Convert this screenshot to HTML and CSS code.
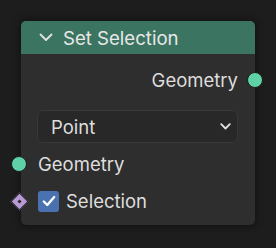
FILE: index.html
```html
<!DOCTYPE html>
<html>
<head>
<meta charset="utf-8">
<link rel="stylesheet" href="styles.css">
</head>
<body>
<div class="node">
  <div class="header">
    <svg class="chev" width="14" height="9" viewBox="0 0 14 9"><polyline points="1.5,1.5 7,7 12.5,1.5" fill="none" stroke="#e2e2e2" stroke-width="1.8" stroke-linecap="round" stroke-linejoin="round"/></svg>
    <span class="title">Set Selection</span>
  </div>
  <div class="content">
    <div class="row out">
      <span>Geometry</span>
      <span class="socket circle right"></span>
    </div>
    <div class="dropdown">
      <span>Point</span>
      <svg width="11" height="7" viewBox="0 0 11 7"><polyline points="1.2,1.2 5.5,5.5 9.8,1.2" fill="none" stroke="#e2e2e2" stroke-width="1.8" stroke-linecap="round" stroke-linejoin="round"/></svg>
    </div>
    <div class="row in">
      <span class="socket circle left"></span>
      <span>Geometry</span>
    </div>
    <div class="row in sel">
      <span class="socket diamond left"><span class="dot"></span></span>
      <span class="check"><svg width="14" height="12" viewBox="0 0 14 12"><polyline points="1.8,6.5 5.3,10 12.2,2" fill="none" stroke="#ffffff" stroke-width="2.3" stroke-linecap="round" stroke-linejoin="round"/></svg></span>
      <span>Selection</span>
    </div>
  </div>
</div>
</body>
</html>
```
FILE: styles.css
```css
html, body {
  margin: 0;
  padding: 0;
  background: #1d1d1d;
  width: 276px;
  height: 248px;
  overflow: hidden;
}
body {
  font-family: Inter, "Noto Sans", sans-serif;
  color: #dedede;
}
.node {
  margin: 21px 0 0 21px;
  width: 234px;
  border-radius: 5px;
  background: #2e2e2e;
  box-shadow: 0 0 6px 2px rgba(0,0,0,0.35);
  position: relative;
}
.header {
  height: 33px;
  background: #3b7561;
  border-radius: 5px 5px 0 0;
  display: flex;
  align-items: center;
  padding-left: 18px;
  gap: 10px;
  box-sizing: border-box;
}
.title {
  font-size: 18.6px;
  color: #e8e8e8;
}
.content {
  padding: 12px 0 10px 0;
  display: flex;
  flex-direction: column;
}
.row {
  height: 28px;
  display: flex;
  align-items: center;
  font-size: 18.5px;
  position: relative;
}
.row.out {
  justify-content: flex-end;
  padding-right: 17px;
}
.row.in {
  padding-left: 17px;
  margin-top: 7px;
}
.row.sel {
  margin-top: 9px;
  gap: 7px;
}
.dropdown {
  margin: 16px 17px 0 16px;
  height: 33px;
  box-sizing: border-box;
  border: 1px solid #383838;
  background: #282828;
  border-radius: 6px;
  display: flex;
  align-items: center;
  justify-content: space-between;
  padding: 0 6px 0 13px;
  font-size: 18.5px;
}
.socket {
  position: absolute;
  top: 50%;
}
.circle {
  width: 14px;
  height: 14px;
  border-radius: 50%;
  background: #5ed2a6;
  border: 1px solid #1d1d1d;
  margin-top: -8px;
}
.circle.right { right: -8px; }
.circle.left { left: -10px; }
.diamond {
  width: 11px;
  height: 11px;
  background: #b89ad6;
  transform: rotate(45deg);
  left: -8px;
  margin-top: -6px;
  display: flex;
  align-items: center;
  justify-content: center;
  border: 1px solid #1d1d1d;
}
.dot {
  width: 3px;
  height: 3px;
  background: #2a2a2a;
}
.check {
  width: 21px;
  height: 21px;
  border-radius: 3px;
  background: #4b72b0;
  display: flex;
  align-items: center;
  justify-content: center;
}
```
